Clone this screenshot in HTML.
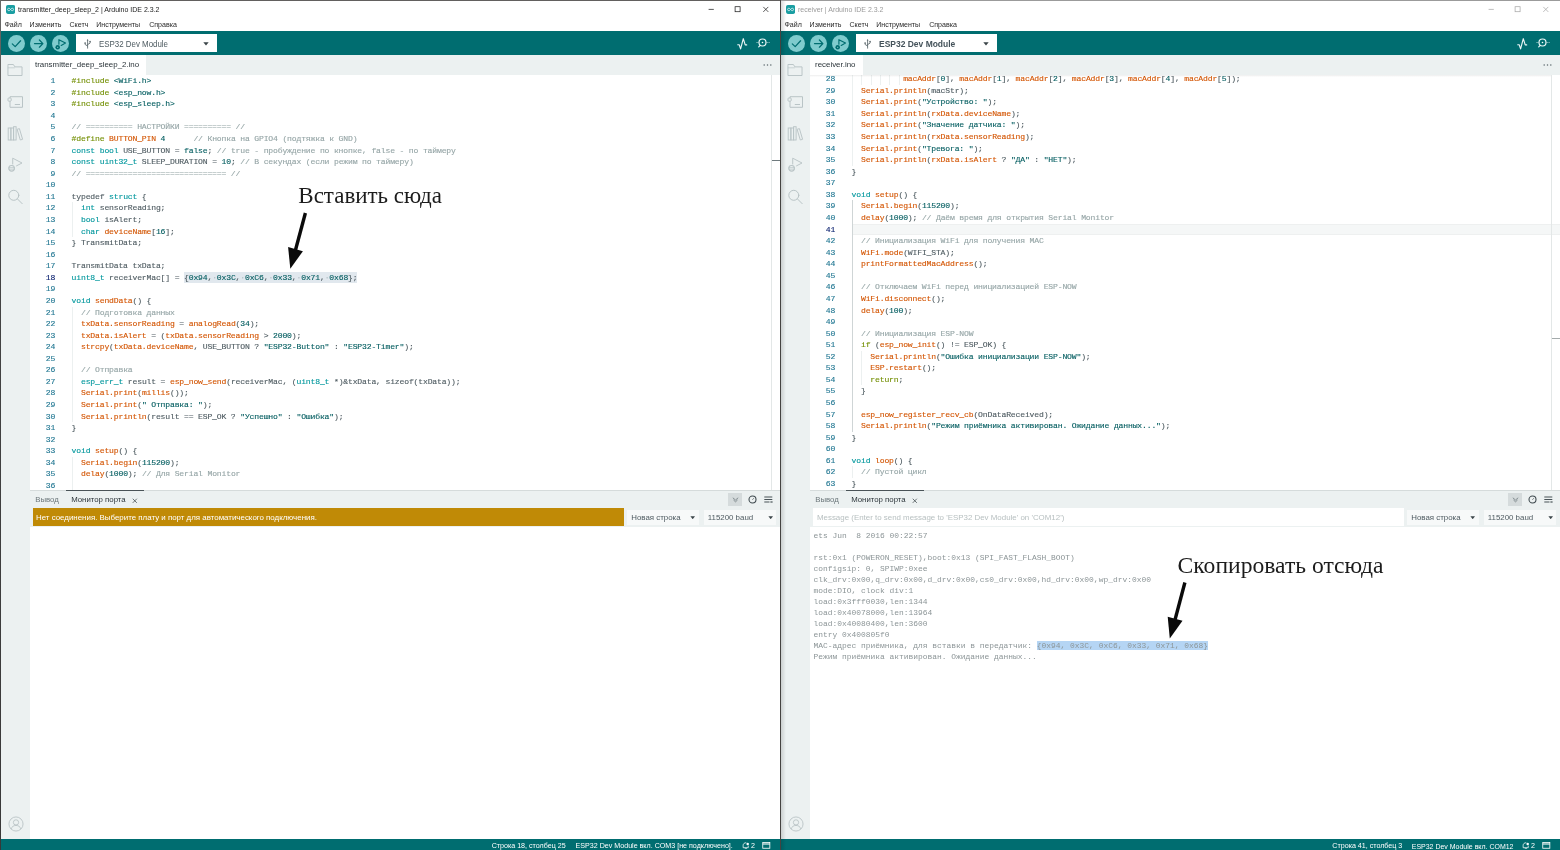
<!DOCTYPE html>
<html lang="ru"><head><meta charset="utf-8"><title>Arduino IDE</title>
<style>
html,body{margin:0;padding:0;background:#fff;}
body{width:1560px;height:850px;overflow:hidden;position:relative;font-family:"Liberation Sans",sans-serif;color:#4e5b61;}
.win{position:absolute;top:0;width:780px;height:850px;overflow:hidden;background:#fff;}
.win div,.win span,.win svg{position:absolute;}
.bl{left:0;top:0;width:1px;height:850px;background:linear-gradient(#686866,#444 30%,#383838);}
.bt{left:0;top:0;width:780px;height:1px;}
.w1 .bt{background:#62605e;height:0.9px;}
.w2 .bt{background:#9b9b9b;height:0.9px;}
.w2 .bl{background:#454341;width:1.1px;}
.shd{left:1.1px;top:1px;width:4.5px;height:849px;background:linear-gradient(90deg,rgba(0,0,0,0.14),rgba(0,0,0,0));}
.w1 .shd{display:none;}
.title{left:18px;top:4.2px;height:11px;line-height:11px;font-size:7.0px;white-space:pre;}
.w1 .title{color:#1c1c1c;}
.w2 .title{color:#9a9a9a;}
.menu{top:19.1px;height:11px;line-height:11px;font-size:7.05px;color:#2a2a2a;white-space:pre;}
.ctl{stroke:#222;}
.w2 .ctl{stroke:#a8a8a8;}
.tb{left:1px;top:31px;width:779px;height:24px;background:#006d70;}
.cb{width:17.2px;height:17.2px;border-radius:50%;background:#7fcbcd;top:3.6px;}
.board{left:75.4px;top:3.3px;width:141.1px;height:17.8px;background:#fff;}
.board .bn{left:22.3px;top:0;height:17.8px;line-height:20.2px;font-size:8.4px;color:#4e5b61;white-space:pre;transform:scaleX(0.944);transform-origin:0 50%;}
.w2 .board .bn{font-weight:bold;font-size:8.95px;transform:scaleX(0.948);color:#44525a;}
.side{left:1px;top:55px;width:29px;height:783.5px;background:#ecf1f1;}
.tabs{left:30px;top:55px;width:750px;height:19.6px;background:#ecf1f1;}
.tab{left:0;top:0;height:19.6px;background:#fff;}
.tab span{left:5px;top:0;height:19.6px;line-height:20.4px;font-size:7.92px;color:#2c353a;white-space:pre;}
.dots{right:8.5px;top:8.5px;width:9px;height:2px;}
.ed{left:30px;top:74.6px;width:750px;height:415.2px;background:#fff;overflow:hidden;}
.edin{left:-30px;top:-74.6px;width:780px;height:850px;}
.ln{-webkit-text-stroke:0.12px;left:0;height:11.565px;width:780px;font-family:"Liberation Mono",monospace;font-size:8.1px;letter-spacing:-0.173px;line-height:11.565px;white-space:pre;}
.ln .no{right:724.9px;top:0;color:#237893;text-align:right;}
.ln.act .no{color:#0b216f;}
.ln .cd{left:71.6px;top:0;color:#4e5b61;}
.k{color:#00979d;position:static !important;}
.p{color:#728e00;position:static !important;}
.f{color:#d35400;position:static !important;}
.s{color:#005c5f;position:static !important;}
.c{color:#95a5a6;position:static !important;}
.w{color:#b4c0c6;position:static !important;}
.sel2{position:static !important;background:#b5d5f4;}
.guide{width:1px;background:#ecf0f0;}
.guide.ga{background:#cfd5d6;}
.selbg{background:#e1e8ee;}
.curline{left:72.3px;width:707.7px;height:11.565px;box-sizing:border-box;border-top:1px solid #eef0f0;border-bottom:1px solid #eef0f0;background:#f5f7f7;}
.mark{left:771.5px;width:8.5px;height:1.2px;}
.ovr{left:770.6px;top:74.6px;width:1px;height:415.2px;background:#e3e7e7;}
.panel{left:30px;top:489.8px;width:750px;height:348.7px;background:#fff;}
.ph{left:0;top:0;width:750px;height:18.4px;background:#ecf1f1;border-top:1px solid #d5dbdb;box-sizing:border-box;}
.ph .t1,.ph .t2{top:3.5px;height:11px;line-height:11px;font-size:7.8px;white-space:pre;}
.ph .t1{left:5.2px;color:#6d787c;}
.ph .t2{left:41.2px;color:#2c353a;}
.ph .ul{left:36px;top:-1px;width:78px;height:1.3px;background:#4a5357;}
.row{left:0;top:18.4px;width:750px;height:19.2px;background:#ecf1f1;}
.warn{left:3px;top:0.3px;width:591px;height:17.6px;background:#c08a06;overflow:hidden;}
.warn span{left:3px;top:0;height:17.6px;line-height:19.4px;color:#fff;font-size:7.92px;white-space:pre;}
.msg{left:3.3px;top:0.3px;width:591px;height:17.6px;background:#fff;}
.msg span{left:3.7px;top:0;height:17.6px;line-height:19.6px;font-size:7.92px;color:#b8c0c1;white-space:pre;}
.dd{top:1.6px;height:15.2px;background:#f7f9f9;}
.dd span{left:4.2px;top:0;height:15.2px;line-height:15.4px;font-size:7.9px;color:#4e5b61;white-space:pre;}
.sl{left:33.4px;height:11px;line-height:11px;font-family:"Liberation Mono",monospace;font-size:7.933px;color:#8c9597;white-space:pre;}
.sb{left:1px;top:838.5px;width:779px;height:11.5px;background:#006d70;}
.st1{top:2.5px;height:11px;line-height:11px;font-size:7.12px;color:#fff;white-space:pre;}
.ann{position:absolute;font-family:"Liberation Serif",serif;color:#1c1c1c;white-space:pre;}
.scrsh{left:30px;top:74.6px;width:741px;height:2.5px;background:linear-gradient(rgba(0,0,0,0.07),rgba(0,0,0,0));}
#stage{position:absolute;left:-8px;top:-8px;width:1576px;height:866px;filter:blur(0.4px);}
#inner{position:absolute;left:8px;top:8px;width:1560px;height:850px;}
.xl{position:absolute;left:-8px;top:-8px;width:9px;height:866px;background:linear-gradient(#686866,#444 30%,#383838);}
.xt1{position:absolute;left:-8px;top:-8px;width:788px;height:8.9px;background:#62605e;}
.xt2{position:absolute;left:780px;top:-8px;width:788px;height:8.9px;background:#9b9b9b;}
.xb{position:absolute;left:-8px;top:845px;width:1576px;height:13px;background:#006d70;}
.xr{position:absolute;left:1555px;top:0;width:13px;height:850px;background:linear-gradient(#fff 0,#fff 31px,#006d70 31px,#006d70 55px,#ecf1f1 55px,#ecf1f1 74.6px,#fff 74.6px,#fff 489.8px,#ecf1f1 489.8px,#ecf1f1 527.4px,#fff 527.4px,#fff 838.5px,#006d70 838.5px);}

</style></head>
<body>
<div id="stage"><div id="inner">
<div class="xl"></div><div class="xt1"></div><div class="xt2"></div><div class="xb"></div><div class="xr"></div>
<div class="win w1" style="left:0px">
<div class="bt"></div>
<svg style="left:5.9px;top:4.9px" width="9.1" height="8.9" viewBox="0 0 20 20" preserveAspectRatio="none"><rect x="0" y="0" width="20" height="20" rx="4" fill="#1a9ea2"/><path d="M10 10c-1.2-1.8-2.3-2.7-3.8-2.7a2.7 2.7 0 0 0 0 5.400c1.500 0 2.600-.9 3.800-2.700zm0 0c1.200 1.800 2.300 2.700 3.800 2.700a2.700 2.700 0 0 0 0-5.400c-1.500 0-2.600.9-3.800 2.700z" fill="none" stroke="#fff" stroke-width="1.5"/></svg>
<span class="title">transmitter_deep_sleep_2 | Arduino IDE 2.3.2</span>
<svg class="ctl" style="left:705px;top:3px" width="70" height="13" viewBox="0 0 70 13" fill="none" stroke-width="0.75"><path d="M3.6 6.4h5.2"/><rect x="30.100" y="3.700" width="5" height="5"/><path d="M58.3 3.900l5 5m0-5l-5 5"/></svg>
<span class="menu" style="left:4.5px">Файл</span>
<span class="menu" style="left:29.6px">Изменить</span>
<span class="menu" style="left:69.5px">Скетч</span>
<span class="menu" style="left:96.2px">Инструменты</span>
<span class="menu" style="left:149.2px">Справка</span>
<div class="tb">
  <div class="cb" style="left:6.9px"><svg width="17.2" height="17.2" viewBox="0 0 17.2 17.2" fill="none" stroke="#006d70" stroke-width="1.25" stroke-linecap="round" stroke-linejoin="round"><path d="M4.300 8.900l2.900 2.700l5.400-5.800"/></svg></div>
  <div class="cb" style="left:28.8px"><svg width="17.2" height="17.2" viewBox="0 0 17.2 17.2" fill="none" stroke="#006d70" stroke-width="1.25" stroke-linecap="round" stroke-linejoin="round"><path d="M4.500 8.600h8.200M9.400 5l3.500 3.600l-3.500 3.600"/></svg></div>
  <div class="cb" style="left:50.700px"><svg width="17.2" height="17.2" viewBox="0 0 17.2 17.2" fill="none" stroke="#006d70" stroke-width="1.15" stroke-linecap="round" stroke-linejoin="round"><path d="M6.900 9.300V4.700l6.600 3.400l-4.300 2.300"/><circle cx="5.700" cy="12.200" r="2.250" fill="#006d70" stroke="none"/><circle cx="5.700" cy="12.300" r="0.550" fill="#a8dcdd" stroke="none"/></svg></div>
  <div class="board">
    <svg style="left:8.1px;top:4.9px" width="7.2" height="9.600" viewBox="0 0 7.2 9.6" fill="none" stroke="#59656a" stroke-width="0.85" stroke-linecap="round" stroke-linejoin="round"><path d="M3.6 1v8.200M3.600 7L1.100 5.500V4.200M3.600 5.600L6.100 4.100V2.800"/><circle cx="1.100" cy="3.900" r="0.750" fill="#59656a" stroke="none"/><circle cx="6.100" cy="2.500" r="0.750" fill="#59656a" stroke="none"/><path d="M2.700 1.500L3.600 0.200L4.500 1.500z" fill="#59656a" stroke="none"/></svg>
    <span class="bn">ESP32 Dev Module</span>
    <svg style="left:126.500px;top:7.600px" width="6" height="4" viewBox="0 0 6 4"><path d="M0.300 0.300h5.400L3 3.500z" fill="#3a4448"/></svg>
  </div>
  <svg style="left:736px;top:5.5px" width="12" height="13" viewBox="0 0 12 13" fill="none" stroke="#eaf6f6" stroke-width="1.15" stroke-linecap="round" stroke-linejoin="round"><path d="M0.700 7.700h1.500l1.400 4.200l2.700-10.200l1.900 6.200h1.500"/></svg>
  <svg style="left:753.05px;top:6.4px" width="17" height="12" viewBox="0 0 17 12" fill="none" stroke="#eaf6f6" stroke-width="1.2" stroke-linecap="round"><circle cx="8.500" cy="5.500" r="3.500"/><circle cx="8.500" cy="5.500" r="0.800" fill="#fff" stroke="none"/><path d="M6.200 8.300l-1.500 1.500" /><path d="M2.600 5.500h1.500M12.900 5.500h1M15 5.500h0.500" stroke-width="0.900" stroke-opacity="0.5"/></svg>
</div>
<div class="side">
  <svg style="left:6.2px;top:8px" width="16.2" height="14" viewBox="0 0 17 14" preserveAspectRatio="none" fill="none" stroke="#b9c4c6" stroke-width="1"><path d="M1 2.700V12.500h14.800V3.900H8.300L6.700 1.500H1z"/><path d="M1 4.800h7.300" stroke-width="0.700"/></svg>
  <svg style="left:5.9px;top:40px" width="17" height="14" viewBox="0 0 17 14" fill="none" stroke="#b9c4c6" stroke-width="1"><path d="M3 3V1.700h12.500v10.600H3V6.200"/><rect x="1" y="3" width="3.200" height="3.200" rx="0.800"/><path d="M7.800 9.500h5.200"/></svg>
  <svg style="left:5.8px;top:70.500px" width="17" height="15" viewBox="0 0 17 15" fill="none" stroke="#b9c4c6" stroke-width="0.95"><rect x="1.200" y="2" width="2.700" height="12"/><rect x="3.900" y="2" width="2.700" height="12"/><rect x="6.600" y="0.700" width="2.500" height="13.300"/><path d="M10.100 3.300l2.300-0.700l3.200 10.700l-2.300 0.700z"/></svg>
  <svg style="left:6px;top:102px" width="17" height="15" viewBox="0 0 17 15" fill="none" stroke="#b9c4c6" stroke-width="0.95" stroke-linejoin="round"><path d="M5.700 7.400V1.200l9.300 4.800l-5.800 3"/><circle cx="4.600" cy="11.300" r="2.800" stroke-width="1.100"/><path d="M1.500 10.600h6.200M1.600 12.200h6" stroke-width="0.700"/></svg>
  <svg style="left:5.7px;top:133.6px" width="17" height="16" viewBox="0 0 17 16" fill="none" stroke="#b9c4c6" stroke-width="1" stroke-linecap="round"><circle cx="6.800" cy="6.300" r="5"/><path d="M10.500 10l4.700 4.700"/></svg>
  <svg style="left:6.5px;top:761.4px" width="16" height="16" viewBox="0 0 17 17" fill="none" stroke="#b9c4c6" stroke-width="0.95"><circle cx="8.500" cy="8.500" r="7.500"/><circle cx="8.500" cy="6.800" r="2.800"/><path d="M3.300 13.800c0.800-2.600 2.800-3.800 5.200-3.800s4.400 1.200 5.200 3.800"/></svg>
</div>
<div class="tabs">
  <div class="tab" style="width:116px"><span>transmitter_deep_sleep_2.ino</span></div>
  <svg class="dots" viewBox="0 0 9 2"><circle cx="1.200" cy="1" r="0.750" fill="#5a666b"/><circle cx="4.500" cy="1" r="0.750" fill="#5a666b"/><circle cx="7.800" cy="1" r="0.750" fill="#5a666b"/></svg>
</div>
<div class="ed"><div class="edin">
<div class="guide" style="left:71.75px;top:202.41px;height:34.70px"></div>
<div class="guide" style="left:71.75px;top:306.50px;height:115.65px"></div>
<div class="guide" style="left:71.75px;top:456.84px;height:34.69px"></div><div class="selbg" style="left:184.09px;top:271.81px;width:173.42px;height:11.56px"></div><div class="ln" style="top:75.20px"><span class="no">1</span><span class="cd"><span class="p">#include</span> <span class="s">&lt;WiFi.h&gt;</span></span></div>
<div class="ln" style="top:86.77px"><span class="no">2</span><span class="cd"><span class="p">#include</span> <span class="s">&lt;esp_now.h&gt;</span></span></div>
<div class="ln" style="top:98.33px"><span class="no">3</span><span class="cd"><span class="p">#include</span> <span class="s">&lt;esp_sleep.h&gt;</span></span></div>
<div class="ln" style="top:109.90px"><span class="no">4</span><span class="cd"></span></div>
<div class="ln" style="top:121.46px"><span class="no">5</span><span class="cd"><span class="c">// ========== НАСТРОЙКИ ========== //</span></span></div>
<div class="ln" style="top:133.03px"><span class="no">6</span><span class="cd"><span class="p">#define</span> <span class="f">BUTTON_PIN</span> <span class="s">4</span>      <span class="c">// Кнопка на GPIO4 (подтяжка к GND)</span></span></div>
<div class="ln" style="top:144.59px"><span class="no">7</span><span class="cd"><span class="k">const</span> <span class="k">bool</span> USE_BUTTON = <span class="s">false</span>; <span class="c">// true - пробуждение по кнопке, false - по таймеру</span></span></div>
<div class="ln" style="top:156.16px"><span class="no">8</span><span class="cd"><span class="k">const</span> <span class="k">uint32_t</span> SLEEP_DURATION = <span class="s">10</span>; <span class="c">// В секундах (если режим по таймеру)</span></span></div>
<div class="ln" style="top:167.72px"><span class="no">9</span><span class="cd"><span class="c">// ============================== //</span></span></div>
<div class="ln" style="top:179.28px"><span class="no">10</span><span class="cd"></span></div>
<div class="ln" style="top:190.85px"><span class="no">11</span><span class="cd">typedef <span class="k">struct</span> {</span></div>
<div class="ln" style="top:202.41px"><span class="no">12</span><span class="cd">  <span class="k">int</span> sensorReading;</span></div>
<div class="ln" style="top:213.98px"><span class="no">13</span><span class="cd">  <span class="k">bool</span> isAlert;</span></div>
<div class="ln" style="top:225.55px"><span class="no">14</span><span class="cd">  <span class="k">char</span> <span class="f">deviceName</span>[<span class="s">16</span>];</span></div>
<div class="ln" style="top:237.11px"><span class="no">15</span><span class="cd">} TransmitData;</span></div>
<div class="ln" style="top:248.68px"><span class="no">16</span><span class="cd"></span></div>
<div class="ln" style="top:260.24px"><span class="no">17</span><span class="cd">TransmitData txData;</span></div>
<div class="ln act" style="top:271.81px"><span class="no">18</span><span class="cd"><span class="k">uint8_t</span> receiverMac[] = {<span class="s">0x94</span>,<span class="w">·</span><span class="s">0x3C</span>,<span class="w">·</span><span class="s">0xC6</span>,<span class="w">·</span><span class="s">0x33</span>,<span class="w">·</span><span class="s">0x71</span>,<span class="w">·</span><span class="s">0x68</span>};</span></div>
<div class="ln" style="top:283.37px"><span class="no">19</span><span class="cd"></span></div>
<div class="ln" style="top:294.94px"><span class="no">20</span><span class="cd"><span class="k">void</span> <span class="f">sendData</span>() {</span></div>
<div class="ln" style="top:306.50px"><span class="no">21</span><span class="cd">  <span class="c">// Подготовка данных</span></span></div>
<div class="ln" style="top:318.06px"><span class="no">22</span><span class="cd">  <span class="f">txData.sensorReading</span> = <span class="f">analogRead</span>(<span class="s">34</span>);</span></div>
<div class="ln" style="top:329.63px"><span class="no">23</span><span class="cd">  <span class="f">txData.isAlert</span> = (<span class="f">txData.sensorReading</span> &gt; <span class="s">2000</span>);</span></div>
<div class="ln" style="top:341.19px"><span class="no">24</span><span class="cd">  <span class="f">strcpy</span>(<span class="f">txData.deviceName</span>, USE_BUTTON ? <span class="s">"ESP32-Button"</span> : <span class="s">"ESP32-Timer"</span>);</span></div>
<div class="ln" style="top:352.76px"><span class="no">25</span><span class="cd"></span></div>
<div class="ln" style="top:364.32px"><span class="no">26</span><span class="cd">  <span class="c">// Отправка</span></span></div>
<div class="ln" style="top:375.89px"><span class="no">27</span><span class="cd">  <span class="k">esp_err_t</span> result = <span class="f">esp_now_send</span>(receiverMac, (<span class="k">uint8_t</span> *)&amp;txData, sizeof(txData));</span></div>
<div class="ln" style="top:387.45px"><span class="no">28</span><span class="cd">  <span class="f">Serial.print</span>(<span class="f">millis</span>());</span></div>
<div class="ln" style="top:399.02px"><span class="no">29</span><span class="cd">  <span class="f">Serial.print</span>(<span class="s">" Отправка: "</span>);</span></div>
<div class="ln" style="top:410.58px"><span class="no">30</span><span class="cd">  <span class="f">Serial.println</span>(result == ESP_OK ? <span class="s">"Успешно"</span> : <span class="s">"Ошибка"</span>);</span></div>
<div class="ln" style="top:422.15px"><span class="no">31</span><span class="cd">}</span></div>
<div class="ln" style="top:433.71px"><span class="no">32</span><span class="cd"></span></div>
<div class="ln" style="top:445.28px"><span class="no">33</span><span class="cd"><span class="k">void</span> <span class="f">setup</span>() {</span></div>
<div class="ln" style="top:456.84px"><span class="no">34</span><span class="cd">  <span class="f">Serial.begin</span>(<span class="s">115200</span>);</span></div>
<div class="ln" style="top:468.41px"><span class="no">35</span><span class="cd">  <span class="f">delay</span>(<span class="s">1000</span>); <span class="c">// Для Serial Monitor</span></span></div>
<div class="ln" style="top:479.97px"><span class="no">36</span><span class="cd"></span></div>
</div></div>
<div class="ovr"></div>
<div class="mark" style="top:160px;background:#6f7a7e"></div>
<div class="panel">
  <div class="ph">
    <div class="ul"></div>
    <span class="t1">Вывод</span><span class="t2">Монитор порта</span>
    <svg style="left:102.2px;top:7px" width="5.6" height="5.6" viewBox="0 0 6 6" stroke="#3a4448" stroke-width="0.800" fill="none"><path d="M0.800 0.800l4.400 4.400M5.200 0.800L0.800 5.200"/></svg>
    <div style="left:698px;top:2.500px;width:14.200px;height:12.600px;background:#d5dbdc"></div>
    <svg style="left:701.500px;top:6px" width="7" height="6" viewBox="0 0 7 6" fill="none" stroke="#7c878a" stroke-width="0.900"><path d="M0.800 0.800L3.500 3l2.700-2.200M1.500 3L3.500 4.800L5.500 3"/></svg>
    <svg style="left:717.500px;top:4.700px" width="9" height="9" viewBox="0 0 9 9" fill="none" stroke="#3f4a4f" stroke-width="1.100"><circle cx="4.500" cy="4.500" r="3.500"/><path d="M4.500 4.700L5.700 3.300" stroke-width="0.800"/></svg>
    <svg style="left:733.500px;top:5.500px" width="9" height="8" viewBox="0 0 9 8" fill="none" stroke="#3f4a4f" stroke-width="0.950"><path d="M0.300 1h8M0.300 3.500h8M0.300 6h5.200"/><path d="M6.500 5l2 2M8.500 5l-2 2" stroke-width="0.700"/></svg>
  </div>
  <div class="row">
    <div class="warn"><span>Нет соединения. Выберите плату и порт для автоматического подключения.</span></div>
    <div class="dd" style="left:597px;width:72px"><span>Новая строка</span><svg style="left:63.4px;top:6px" width="5.4" height="3.500" viewBox="0 0 5 3.500"><path d="M0.200 0.300h4.600L2.500 3.200z" fill="#3a4448"/></svg></div>
    <div class="dd" style="left:673.500px;width:72.500px"><span>115200 baud</span><svg style="left:64px;top:6px" width="5.4" height="3.500" viewBox="0 0 5 3.500"><path d="M0.200 0.300h4.600L2.500 3.200z" fill="#3a4448"/></svg></div>
  </div>
</div>

<div class="sb">
  <span class="st1" style="right:214.4px">Строка 18, столбец 25</span><span class="st1" style="right:47.2px">ESP32 Dev Module вкл. COM3 [не подключено].</span>
  <svg style="right:30.7px;top:3.3px" width="7.6" height="7.6" viewBox="0 0 8 8" fill="none" stroke="#fff" stroke-width="0.800"><path d="M1.200 6V3.500a2.700 2.700 0 0 1 3.300-2.600M6.600 3.800V6H1.200"/><path d="M3.200 6.500a0.800 0.800 0 0 0 1.600 0" /><circle cx="6" cy="2" r="1.300" fill="#fff" stroke="none"/></svg>
  <span class="st1" style="right:25px">2</span>
  <svg style="right:9px;top:3.6px" width="8.6" height="6.8" viewBox="0 0 9 7.500" fill="none" stroke="#fff" stroke-width="0.900"><rect x="0.600" y="0.600" width="7.800" height="6.300"/><path d="M0.600 2.200h7.800" stroke-width="1.200"/></svg>
</div>
<div class="shd"></div>
<div class="bl"></div>
</div>

<div class="win w2" style="left:780px">
<div class="bt"></div>
<svg style="left:5.9px;top:4.9px" width="9.1" height="8.9" viewBox="0 0 20 20" preserveAspectRatio="none"><rect x="0" y="0" width="20" height="20" rx="4" fill="#1a9ea2"/><path d="M10 10c-1.2-1.8-2.3-2.7-3.8-2.7a2.7 2.7 0 0 0 0 5.400c1.500 0 2.600-.9 3.800-2.700zm0 0c1.200 1.800 2.300 2.700 3.800 2.700a2.700 2.700 0 0 0 0-5.400c-1.500 0-2.600.9-3.800 2.700z" fill="none" stroke="#fff" stroke-width="1.5"/></svg>
<span class="title">receiver | Arduino IDE 2.3.2</span>
<svg class="ctl" style="left:705px;top:3px" width="70" height="13" viewBox="0 0 70 13" fill="none" stroke-width="0.75"><path d="M3.6 6.4h5.2"/><rect x="30.100" y="3.700" width="5" height="5"/><path d="M58.3 3.900l5 5m0-5l-5 5"/></svg>
<span class="menu" style="left:4.5px">Файл</span>
<span class="menu" style="left:29.6px">Изменить</span>
<span class="menu" style="left:69.5px">Скетч</span>
<span class="menu" style="left:96.2px">Инструменты</span>
<span class="menu" style="left:149.2px">Справка</span>
<div class="tb">
  <div class="cb" style="left:6.9px"><svg width="17.2" height="17.2" viewBox="0 0 17.2 17.2" fill="none" stroke="#006d70" stroke-width="1.25" stroke-linecap="round" stroke-linejoin="round"><path d="M4.300 8.900l2.900 2.700l5.400-5.800"/></svg></div>
  <div class="cb" style="left:28.8px"><svg width="17.2" height="17.2" viewBox="0 0 17.2 17.2" fill="none" stroke="#006d70" stroke-width="1.25" stroke-linecap="round" stroke-linejoin="round"><path d="M4.500 8.600h8.200M9.400 5l3.500 3.600l-3.500 3.600"/></svg></div>
  <div class="cb" style="left:50.700px"><svg width="17.2" height="17.2" viewBox="0 0 17.2 17.2" fill="none" stroke="#006d70" stroke-width="1.15" stroke-linecap="round" stroke-linejoin="round"><path d="M6.900 9.300V4.700l6.600 3.400l-4.300 2.300"/><circle cx="5.700" cy="12.200" r="2.250" fill="#006d70" stroke="none"/><circle cx="5.700" cy="12.300" r="0.550" fill="#a8dcdd" stroke="none"/></svg></div>
  <div class="board">
    <svg style="left:8.1px;top:4.9px" width="7.2" height="9.600" viewBox="0 0 7.2 9.6" fill="none" stroke="#59656a" stroke-width="0.85" stroke-linecap="round" stroke-linejoin="round"><path d="M3.6 1v8.200M3.600 7L1.100 5.500V4.200M3.600 5.600L6.100 4.100V2.800"/><circle cx="1.100" cy="3.900" r="0.750" fill="#59656a" stroke="none"/><circle cx="6.100" cy="2.500" r="0.750" fill="#59656a" stroke="none"/><path d="M2.700 1.500L3.600 0.200L4.500 1.500z" fill="#59656a" stroke="none"/></svg>
    <span class="bn">ESP32 Dev Module</span>
    <svg style="left:126.500px;top:7.600px" width="6" height="4" viewBox="0 0 6 4"><path d="M0.300 0.300h5.400L3 3.500z" fill="#3a4448"/></svg>
  </div>
  <svg style="left:736px;top:5.5px" width="12" height="13" viewBox="0 0 12 13" fill="none" stroke="#eaf6f6" stroke-width="1.15" stroke-linecap="round" stroke-linejoin="round"><path d="M0.700 7.700h1.500l1.400 4.200l2.700-10.200l1.900 6.200h1.500"/></svg>
  <svg style="left:753.05px;top:6.4px" width="17" height="12" viewBox="0 0 17 12" fill="none" stroke="#eaf6f6" stroke-width="1.2" stroke-linecap="round"><circle cx="8.500" cy="5.500" r="3.500"/><circle cx="8.500" cy="5.500" r="0.800" fill="#fff" stroke="none"/><path d="M6.200 8.300l-1.500 1.500" /><path d="M2.600 5.500h1.500M12.900 5.500h1M15 5.500h0.500" stroke-width="0.900" stroke-opacity="0.5"/></svg>
</div>
<div class="side">
  <svg style="left:6.2px;top:8px" width="16.2" height="14" viewBox="0 0 17 14" preserveAspectRatio="none" fill="none" stroke="#b9c4c6" stroke-width="1"><path d="M1 2.700V12.500h14.800V3.900H8.300L6.700 1.500H1z"/><path d="M1 4.800h7.300" stroke-width="0.700"/></svg>
  <svg style="left:5.9px;top:40px" width="17" height="14" viewBox="0 0 17 14" fill="none" stroke="#b9c4c6" stroke-width="1"><path d="M3 3V1.700h12.500v10.600H3V6.200"/><rect x="1" y="3" width="3.200" height="3.200" rx="0.800"/><path d="M7.800 9.500h5.200"/></svg>
  <svg style="left:5.8px;top:70.500px" width="17" height="15" viewBox="0 0 17 15" fill="none" stroke="#b9c4c6" stroke-width="0.95"><rect x="1.200" y="2" width="2.700" height="12"/><rect x="3.900" y="2" width="2.700" height="12"/><rect x="6.600" y="0.700" width="2.500" height="13.300"/><path d="M10.100 3.300l2.300-0.700l3.200 10.700l-2.300 0.700z"/></svg>
  <svg style="left:6px;top:102px" width="17" height="15" viewBox="0 0 17 15" fill="none" stroke="#b9c4c6" stroke-width="0.95" stroke-linejoin="round"><path d="M5.700 7.400V1.200l9.300 4.800l-5.800 3"/><circle cx="4.600" cy="11.300" r="2.800" stroke-width="1.100"/><path d="M1.500 10.600h6.200M1.600 12.200h6" stroke-width="0.700"/></svg>
  <svg style="left:5.7px;top:133.6px" width="17" height="16" viewBox="0 0 17 16" fill="none" stroke="#b9c4c6" stroke-width="1" stroke-linecap="round"><circle cx="6.800" cy="6.300" r="5"/><path d="M10.500 10l4.700 4.700"/></svg>
  <svg style="left:6.5px;top:761.4px" width="16" height="16" viewBox="0 0 17 17" fill="none" stroke="#b9c4c6" stroke-width="0.95"><circle cx="8.500" cy="8.500" r="7.500"/><circle cx="8.500" cy="6.800" r="2.800"/><path d="M3.300 13.800c0.800-2.600 2.800-3.800 5.200-3.800s4.400 1.200 5.200 3.800"/></svg>
</div>
<div class="tabs">
  <div class="tab" style="width:53px"><span>receiver.ino</span></div>
  <svg class="dots" viewBox="0 0 9 2"><circle cx="1.200" cy="1" r="0.750" fill="#5a666b"/><circle cx="4.500" cy="1" r="0.750" fill="#5a666b"/><circle cx="7.800" cy="1" r="0.750" fill="#5a666b"/></svg>
</div>
<div class="ed"><div class="edin">
<div class="curline" style="top:223.55px"></div><div class="guide" style="left:71.75px;top:73.20px;height:92.52px"></div>
<div class="guide" style="left:81.12px;top:73.20px;height:11.56px"></div>
<div class="guide" style="left:90.50px;top:73.20px;height:11.56px"></div>
<div class="guide" style="left:99.87px;top:73.20px;height:11.56px"></div>
<div class="guide" style="left:109.25px;top:73.20px;height:11.56px"></div>
<div class="guide" style="left:118.62px;top:73.20px;height:11.56px"></div>
<div class="guide ga" style="left:71.75px;top:200.41px;height:231.30px"></div>
<div class="guide" style="left:81.12px;top:350.76px;height:34.69px"></div>
<div class="guide" style="left:71.75px;top:466.41px;height:11.56px"></div><div class="ln" style="top:73.20px"><span class="no">28</span><span class="cd">           <span class="f">macAddr</span>[<span class="s">0</span>], <span class="f">macAddr</span>[<span class="s">1</span>], <span class="f">macAddr</span>[<span class="s">2</span>], <span class="f">macAddr</span>[<span class="s">3</span>], <span class="f">macAddr</span>[<span class="s">4</span>], <span class="f">macAddr</span>[<span class="s">5</span>]);</span></div>
<div class="ln" style="top:84.77px"><span class="no">29</span><span class="cd">  <span class="f">Serial.println</span>(macStr);</span></div>
<div class="ln" style="top:96.33px"><span class="no">30</span><span class="cd">  <span class="f">Serial.print</span>(<span class="s">"Устройство: "</span>);</span></div>
<div class="ln" style="top:107.90px"><span class="no">31</span><span class="cd">  <span class="f">Serial.println</span>(<span class="f">rxData.deviceName</span>);</span></div>
<div class="ln" style="top:119.46px"><span class="no">32</span><span class="cd">  <span class="f">Serial.print</span>(<span class="s">"Значение датчика: "</span>);</span></div>
<div class="ln" style="top:131.03px"><span class="no">33</span><span class="cd">  <span class="f">Serial.println</span>(<span class="f">rxData.sensorReading</span>);</span></div>
<div class="ln" style="top:142.59px"><span class="no">34</span><span class="cd">  <span class="f">Serial.print</span>(<span class="s">"Тревога: "</span>);</span></div>
<div class="ln" style="top:154.16px"><span class="no">35</span><span class="cd">  <span class="f">Serial.println</span>(<span class="f">rxData.isAlert</span> ? <span class="s">"ДА"</span> : <span class="s">"НЕТ"</span>);</span></div>
<div class="ln" style="top:165.72px"><span class="no">36</span><span class="cd">}</span></div>
<div class="ln" style="top:177.28px"><span class="no">37</span><span class="cd"></span></div>
<div class="ln" style="top:188.85px"><span class="no">38</span><span class="cd"><span class="k">void</span> <span class="f">setup</span>() {</span></div>
<div class="ln" style="top:200.41px"><span class="no">39</span><span class="cd">  <span class="f">Serial.begin</span>(<span class="s">115200</span>);</span></div>
<div class="ln" style="top:211.98px"><span class="no">40</span><span class="cd">  <span class="f">delay</span>(<span class="s">1000</span>); <span class="c">// Даём время для открытия Serial Monitor</span></span></div>
<div class="ln act" style="top:223.55px"><span class="no">41</span><span class="cd"></span></div>
<div class="ln" style="top:235.11px"><span class="no">42</span><span class="cd">  <span class="c">// Инициализация WiFi для получения MAC</span></span></div>
<div class="ln" style="top:246.68px"><span class="no">43</span><span class="cd">  <span class="f">WiFi.mode</span>(WIFI_STA);</span></div>
<div class="ln" style="top:258.24px"><span class="no">44</span><span class="cd">  <span class="f">printFormattedMacAddress</span>();</span></div>
<div class="ln" style="top:269.81px"><span class="no">45</span><span class="cd"></span></div>
<div class="ln" style="top:281.37px"><span class="no">46</span><span class="cd">  <span class="c">// Отключаем WiFi перед инициализацией ESP-NOW</span></span></div>
<div class="ln" style="top:292.94px"><span class="no">47</span><span class="cd">  <span class="f">WiFi.disconnect</span>();</span></div>
<div class="ln" style="top:304.50px"><span class="no">48</span><span class="cd">  <span class="f">delay</span>(<span class="s">100</span>);</span></div>
<div class="ln" style="top:316.06px"><span class="no">49</span><span class="cd"></span></div>
<div class="ln" style="top:327.63px"><span class="no">50</span><span class="cd">  <span class="c">// Инициализация ESP-NOW</span></span></div>
<div class="ln" style="top:339.19px"><span class="no">51</span><span class="cd">  <span class="p">if</span> (<span class="f">esp_now_init</span>() != ESP_OK) {</span></div>
<div class="ln" style="top:350.76px"><span class="no">52</span><span class="cd">    <span class="f">Serial.println</span>(<span class="s">"Ошибка инициализации ESP-NOW"</span>);</span></div>
<div class="ln" style="top:362.32px"><span class="no">53</span><span class="cd">    <span class="f">ESP.restart</span>();</span></div>
<div class="ln" style="top:373.89px"><span class="no">54</span><span class="cd">    <span class="p">return</span>;</span></div>
<div class="ln" style="top:385.45px"><span class="no">55</span><span class="cd">  }</span></div>
<div class="ln" style="top:397.02px"><span class="no">56</span><span class="cd"></span></div>
<div class="ln" style="top:408.58px"><span class="no">57</span><span class="cd">  <span class="f">esp_now_register_recv_cb</span>(OnDataReceived);</span></div>
<div class="ln" style="top:420.15px"><span class="no">58</span><span class="cd">  <span class="f">Serial.println</span>(<span class="s">"Режим приёмника активирован. Ожидание данных..."</span>);</span></div>
<div class="ln" style="top:431.71px"><span class="no">59</span><span class="cd">}</span></div>
<div class="ln" style="top:443.28px"><span class="no">60</span><span class="cd"></span></div>
<div class="ln" style="top:454.84px"><span class="no">61</span><span class="cd"><span class="k">void</span> <span class="f">loop</span>() {</span></div>
<div class="ln" style="top:466.41px"><span class="no">62</span><span class="cd">  <span class="c">// Пустой цикл</span></span></div>
<div class="ln" style="top:477.97px"><span class="no">63</span><span class="cd">}</span></div><div class="scrsh"></div>
</div></div>
<div class="ovr"></div>
<div class="mark" style="top:337.7px;background:#a3aaab"></div>
<div class="panel">
  <div class="ph">
    <div class="ul"></div>
    <span class="t1">Вывод</span><span class="t2">Монитор порта</span>
    <svg style="left:102.2px;top:7px" width="5.6" height="5.6" viewBox="0 0 6 6" stroke="#3a4448" stroke-width="0.800" fill="none"><path d="M0.800 0.800l4.400 4.400M5.200 0.800L0.800 5.200"/></svg>
    <div style="left:698px;top:2.500px;width:14.200px;height:12.600px;background:#d5dbdc"></div>
    <svg style="left:701.500px;top:6px" width="7" height="6" viewBox="0 0 7 6" fill="none" stroke="#7c878a" stroke-width="0.900"><path d="M0.800 0.800L3.500 3l2.700-2.200M1.500 3L3.500 4.800L5.500 3"/></svg>
    <svg style="left:717.500px;top:4.700px" width="9" height="9" viewBox="0 0 9 9" fill="none" stroke="#3f4a4f" stroke-width="1.100"><circle cx="4.500" cy="4.500" r="3.500"/><path d="M4.500 4.700L5.700 3.300" stroke-width="0.800"/></svg>
    <svg style="left:733.500px;top:5.500px" width="9" height="8" viewBox="0 0 9 8" fill="none" stroke="#3f4a4f" stroke-width="0.950"><path d="M0.300 1h8M0.300 3.500h8M0.300 6h5.200"/><path d="M6.500 5l2 2M8.500 5l-2 2" stroke-width="0.700"/></svg>
  </div>
  <div class="row">
    <div class="msg"><span>Message (Enter to send message to 'ESP32 Dev Module' on 'COM12')</span></div>
    <div class="dd" style="left:597px;width:72px"><span>Новая строка</span><svg style="left:63.4px;top:6px" width="5.4" height="3.500" viewBox="0 0 5 3.500"><path d="M0.200 0.300h4.600L2.500 3.200z" fill="#3a4448"/></svg></div>
    <div class="dd" style="left:673.500px;width:72.500px"><span>115200 baud</span><svg style="left:64px;top:6px" width="5.4" height="3.500" viewBox="0 0 5 3.500"><path d="M0.200 0.300h4.600L2.500 3.200z" fill="#3a4448"/></svg></div>
  </div>
</div>
<div class="sl" style="top:530.30px">ets Jun  8 2016 00:22:57</div>
<div class="sl" style="top:541.30px"></div>
<div class="sl" style="top:552.30px">rst:0x1 (POWERON_RESET),boot:0x13 (SPI_FAST_FLASH_BOOT)</div>
<div class="sl" style="top:563.30px">configsip: 0, SPIWP:0xee</div>
<div class="sl" style="top:574.30px">clk_drv:0x00,q_drv:0x00,d_drv:0x00,cs0_drv:0x00,hd_drv:0x00,wp_drv:0x00</div>
<div class="sl" style="top:585.30px">mode:DIO, clock div:1</div>
<div class="sl" style="top:596.30px">load:0x3fff0030,len:1344</div>
<div class="sl" style="top:607.30px">load:0x40078000,len:13964</div>
<div class="sl" style="top:618.30px">load:0x40080400,len:3600</div>
<div class="sl" style="top:629.30px">entry 0x400805f0</div>
<div class="sl" style="top:640.30px">MAC-адрес приёмника, для вставки в передатчик: <span class="sel2">{0x94, 0x3C, 0xC6, 0x33, 0x71, 0x68}</span></div>
<div class="sl" style="top:651.30px">Режим приёмника активирован. Ожидание данных...</div>
<div class="sb">
  <span class="st1" style="right:157.7px">Строка 41, столбец 3</span><span class="st1" style="right:46.5px;font-size:6.99px">ESP32 Dev Module вкл. COM12</span>
  <svg style="right:30.7px;top:3.3px" width="7.6" height="7.6" viewBox="0 0 8 8" fill="none" stroke="#fff" stroke-width="0.800"><path d="M1.200 6V3.500a2.700 2.700 0 0 1 3.300-2.600M6.600 3.800V6H1.200"/><path d="M3.200 6.500a0.800 0.800 0 0 0 1.600 0" /><circle cx="6" cy="2" r="1.300" fill="#fff" stroke="none"/></svg>
  <span class="st1" style="right:25px">2</span>
  <svg style="right:9px;top:3.6px" width="8.6" height="6.8" viewBox="0 0 9 7.500" fill="none" stroke="#fff" stroke-width="0.900"><rect x="0.600" y="0.600" width="7.800" height="6.300"/><path d="M0.600 2.200h7.800" stroke-width="1.200"/></svg>
</div>
<div class="shd"></div>
<div class="bl"></div>
</div>

<div class="ann" style="left:298.3px;top:182.7px;font-size:23px;line-height:26px;">Вставить сюда</div>
<div class="ann" style="left:1177.6px;top:552.1px;font-size:23.6px;line-height:27px;">Скопировать отсюда</div>
<svg style="position:absolute;left:0;top:0" width="1560" height="850" viewBox="0 0 1560 850"><g fill="#0a0a0a" stroke="#0a0a0a">
<path d="M305.400 213L295.500 250" stroke-width="3.400" fill="none"/>
<path d="M290.300 268.700L288.100 247L302.900 251.200z" stroke="none"/>
<path d="M1184.900 582.500L1175.100 619.500" stroke-width="3.400" fill="none"/>
<path d="M1169.800 638.500L1167.700 616.800L1182.500 620.800z" stroke="none"/>
</g></svg>

</div></div>
</body></html>
